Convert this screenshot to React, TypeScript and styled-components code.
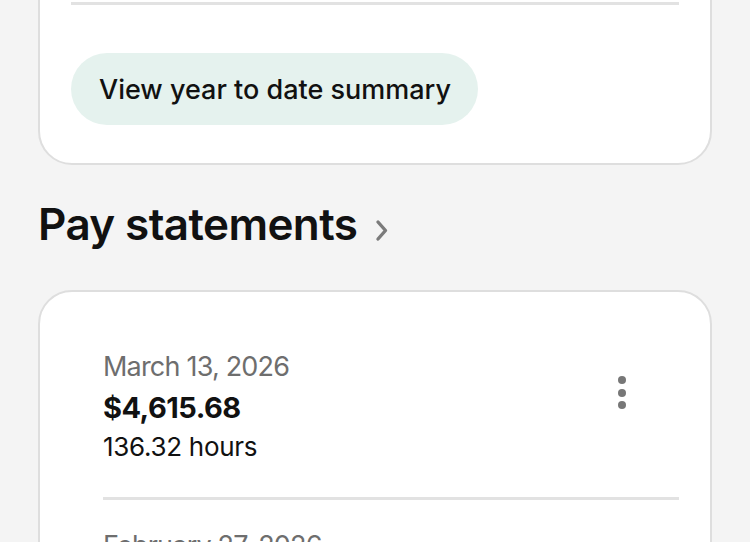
import styled, { createGlobalStyle } from 'styled-components';

const GlobalStyle = createGlobalStyle`
  body {
    margin: 0;
    background: #f4f4f4;
    font-family: Inter, "Noto Sans", sans-serif;
    color: #111;
  }
`;

type Statement = {
  date: string;
  amount: string;
  hours: string;
};

const statements: Statement[] = [
  { date: 'March 13, 2026', amount: '$4,615.68', hours: '136.32 hours' },
  { date: 'February 27, 2026', amount: '$4,480.12', hours: '132.50 hours' },
];

function Chevron() {
  return (
    <svg width="18" height="24" viewBox="0 0 18 24" fill="none">
      <path
        d="M5 4L12.5 12.5L5 21"
        stroke="#7b7b7b"
        strokeWidth="3.4"
        strokeLinecap="round"
        strokeLinejoin="round"
      />
    </svg>
  );
}

function App() {
  return (
    <>
      <GlobalStyle />
      <Page>
        <SummaryCard>
          <Divider />
          <SummaryButton>View year to date summary</SummaryButton>
        </SummaryCard>

        <SectionTitle>
          Pay statements
          <Chevron />
        </SectionTitle>

        <ListCard>
          {statements.map((s, i) => (
            <StatementRow key={s.date} $last={i === statements.length - 1}>
              <Info>
                <DateText>{s.date}</DateText>
                <Amount>{s.amount}</Amount>
                <Hours>{s.hours}</Hours>
              </Info>
              <MoreButton aria-label="More options">
                <Dot />
                <Dot />
                <Dot />
              </MoreButton>
            </StatementRow>
          ))}
        </ListCard>
      </Page>
    </>
  );
}

export default App;

const Page = styled.div`
  margin-top: -42px;
  padding: 0 38px 40px 38px;
`;

const Card = styled.div`
  background: #fff;
  border: 2px solid #dedede;
  border-radius: 34px;
  padding: 0 31px;
`;

const SummaryCard = styled(Card)`
  padding-top: 42px;
  padding-bottom: 38px;
`;

const Divider = styled.div`
  height: 3px;
  background: #e2e2e2;
`;

const SummaryButton = styled.button`
  margin-top: 48px;
  height: 72px;
  padding: 0 27px 0 28px;
  border: none;
  border-radius: 36px;
  background: #e5f2ee;
  font-family: inherit;
  font-size: 27px;
  font-weight: 500;
  letter-spacing: 0;
  color: #111;
  cursor: pointer;
`;

const SectionTitle = styled.h2`
  display: flex;
  align-items: center;
  gap: 16px;
  margin: 33px 0 39px 0;
  font-size: 44px;
  line-height: 53px;
  font-weight: 600;
  letter-spacing: -0.6px;

  svg {
    margin-top: 10px;
  }
`;

const ListCard = styled(Card)`
  padding-top: 29px;
`;

const StatementRow = styled.div<{ $last: boolean }>`
  display: flex;
  justify-content: space-between;
  align-items: flex-start;
  margin-left: 32px;
  padding: 29px 0 32px 0;
  border-bottom: ${(p) => (p.$last ? 'none' : '3px solid #e2e2e2')};
`;

const Info = styled.div`
  display: flex;
  flex-direction: column;
`;

const DateText = styled.div`
  font-size: 27px;
  line-height: 34px;
  color: #6e6e6e;
  letter-spacing: -0.8px;
`;

const Amount = styled.div`
  margin-top: 4px;
  font-size: 29px;
  line-height: 40px;
  font-weight: 700;
  letter-spacing: -0.5px;
`;

const Hours = styled.div`
  margin-top: 1px;
  font-size: 26px;
  line-height: 36px;
  letter-spacing: -0.3px;
`;

const MoreButton = styled.button`
  display: flex;
  flex-direction: column;
  align-items: center;
  gap: 4.5px;
  width: 40px;
  margin: 22px 37px 0 0;
  padding: 4px 0;
  border: none;
  background: none;
  cursor: pointer;
`;

const Dot = styled.span`
  width: 8px;
  height: 8px;
  border-radius: 50%;
  background: #777;
`;
